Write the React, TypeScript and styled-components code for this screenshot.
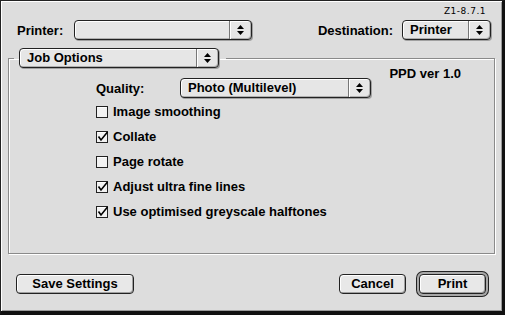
import React from 'react';
import styled, { createGlobalStyle } from 'styled-components';

const GlobalStyle = createGlobalStyle`
  html, body {
    margin: 0;
    padding: 0;
    background: #dddddd;
  }
  body {
    font-family: 'Liberation Sans', Arial, sans-serif;
    font-weight: bold;
    font-size: 13px;
    color: #000;
  }
`;

const Window = styled.div`
  width: 505px;
  height: 315px;
  box-sizing: border-box;
  display: flex;
  flex-direction: column;
  background: #dddddd;
  border-top: 1px solid #222;
  border-left: 1px solid #222;
  border-right: 3px solid #111;
  border-bottom: 4px solid #111;
  box-shadow: inset 1px 1px 0 #fff, inset -1px -1px 0 #999;
  padding: 5px 7px 0 7px;
`;

const Version = styled.div`
  font-family: 'DejaVu Sans', sans-serif;
  font-weight: normal;
  font-size: 9px;
  line-height: 11px;
  letter-spacing: 0.5px;
  text-align: right;
  padding-right: 9px;
`;

const TopRow = styled.div`
  display: flex;
  justify-content: space-between;
  align-items: center;
  margin-top: 3px;
  padding: 0 4px 0 9px;
`;

const Field = styled.div<{ $gap: number }>`
  display: flex;
  align-items: center;
  gap: ${({ $gap }) => $gap}px;
`;

const Label = styled.span`
  line-height: 15px;
  white-space: nowrap;
`;

const PopupBox = styled.div<{ $width: number }>`
  width: ${({ $width }) => $width}px;
  height: 20px;
  box-sizing: border-box;
  display: flex;
  align-items: stretch;
  border: 1px solid #222;
  border-radius: 4px;
  background: #e6e6e6;
  box-shadow: inset 1px 1px 0 #fff, inset -1px -1px 0 #b0b0b0, 1px 1px 0 #a0a0a0;
`;

const PopupText = styled.span`
  flex: 1;
  padding-left: 7px;
  line-height: 18px;
  white-space: nowrap;
  overflow: hidden;
`;

const PopupArrow = styled.span`
  width: 21px;
  display: flex;
  align-items: center;
  justify-content: center;
  border-left: 1px solid #777;
  box-shadow: inset 1px 0 0 #fff;
`;

const Popup: React.FC<{ width: number; value?: string }> = ({ width, value }) => (
  <PopupBox $width={width}>
    <PopupText>{value}</PopupText>
    <PopupArrow>
      <svg width="7" height="10" viewBox="0 0 7 10">
        <path d="M3.5 0 L7 4 L0 4 Z M0 6 L7 6 L3.5 10 Z" fill="#000" />
      </svg>
    </PopupArrow>
  </PopupBox>
);

const Group = styled.fieldset`
  margin: 8px 0 0 0;
  padding: 0;
  height: 206px;
  box-sizing: border-box;
  border: 1px solid #8a8a8a;
  box-shadow: 1px 1px 0 #fff, inset 1px 1px 0 #fff;
  min-width: 0;
`;

const Legend = styled.legend`
  margin-left: 5px;
  padding: 0 7px 0 5px;
`;

const GroupBody = styled.div`
  display: flex;
  flex-direction: column;
  padding: 0 33px 0 87px;
`;

const PpdLine = styled.div`
  height: 10px;
  line-height: 11px;
  text-align: right;
`;

const QualityRow = styled.div`
  display: flex;
  align-items: center;
  height: 20px;
`;

const QualityLabel = styled(Label)`
  width: 84px;
`;

const CheckList = styled.div`
  display: flex;
  flex-direction: column;
  margin-top: 1px;
`;

const CheckRow = styled.div`
  height: 25px;
  display: flex;
  align-items: center;
  gap: 4px;
`;

const CheckBox: React.FC<{ checked: boolean }> = ({ checked }) => (
  <svg width="13" height="12" viewBox="0 0 13 12">
    <rect x="0.5" y="0.5" width="11" height="11" fill="#f2f2f2" stroke="#222" />
    <path d="M1.5 1.5 H10.5" stroke="#fff" />
    {checked && (
      <path
        d="M2.5 5.5 L5 9 L11.5 1"
        fill="none"
        stroke="#000"
        strokeWidth="1.6"
      />
    )}
  </svg>
);

const ButtonRow = styled.div`
  display: flex;
  justify-content: space-between;
  align-items: center;
  margin-top: 20px;
  padding: 0 9px 0 8px;
`;

const ButtonGroup = styled.div`
  display: flex;
  gap: 13px;
`;

const Button = styled.button<{ $width: number; $default?: boolean }>`
  width: ${({ $width }) => $width}px;
  height: 20px;
  box-sizing: border-box;
  padding: 0;
  font: inherit;
  color: #000;
  line-height: 18px;
  border: 1px solid #222;
  border-radius: 4px;
  background: #e8e8e8;
  box-shadow: inset 1px 1px 0 #fff, inset -1px -1px 0 #a0a0a0
    ${({ $default }) => ($default ? ', 0 0 0 2px #a8a8a8, 0 0 0 3px #222' : '')};
`;

const checks: { label: string; checked: boolean }[] = [
  { label: 'Image smoothing', checked: false },
  { label: 'Collate', checked: true },
  { label: 'Page rotate', checked: false },
  { label: 'Adjust ultra fine lines', checked: true },
  { label: 'Use optimised greyscale halftones', checked: true },
];

export default function App() {
  return (
    <>
      <GlobalStyle />
      <Window>
        <Version>Z1-8.7.1</Version>
        <TopRow>
          <Field $gap={11}>
            <Label>Printer:</Label>
            <Popup width={178} />
          </Field>
          <Field $gap={9}>
            <Label>Destination:</Label>
            <Popup width={89} value="Printer" />
          </Field>
        </TopRow>
        <Group>
          <Legend>
            <Popup width={200} value="Job Options" />
          </Legend>
          <GroupBody>
            <PpdLine>PPD ver 1.0</PpdLine>
            <QualityRow>
              <QualityLabel>Quality:</QualityLabel>
              <Popup width={191} value="Photo (Multilevel)" />
            </QualityRow>
            <CheckList>
              {checks.map((c) => (
                <CheckRow key={c.label}>
                  <CheckBox checked={c.checked} />
                  <Label>{c.label}</Label>
                </CheckRow>
              ))}
            </CheckList>
          </GroupBody>
        </Group>
        <ButtonRow>
          <Button $width={118}>Save Settings</Button>
          <ButtonGroup>
            <Button $width={67}>Cancel</Button>
            <Button $width={67} $default>
              Print
            </Button>
          </ButtonGroup>
        </ButtonRow>
      </Window>
    </>
  );
}
